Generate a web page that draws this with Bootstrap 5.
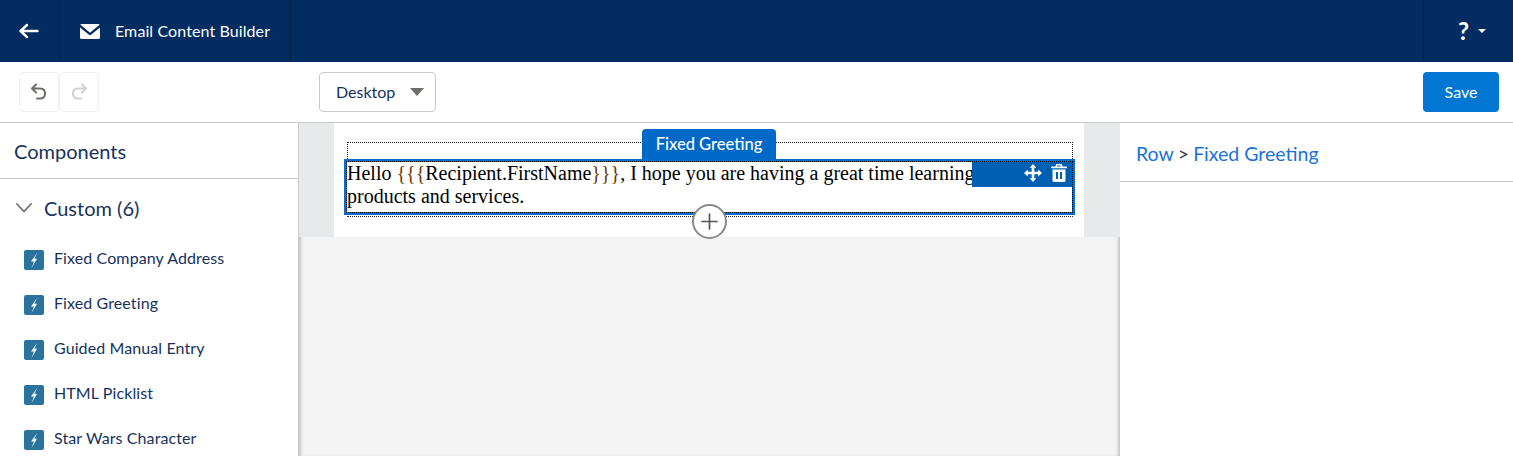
<!DOCTYPE html>
<html lang="en"><head><meta charset="utf-8"><title>Email Content Builder</title>
<link href="https://cdn.jsdelivr.net/npm/bootstrap@5.3.0/dist/css/bootstrap.min.css" rel="stylesheet">
<style>
html,body{height:456px;overflow:hidden}
body{font-family:"Lato","Open Sans",sans-serif;color:#16325c;font-size:16px;background:#fff}
.topbar{height:62px;background:#032d60;color:#fff}
.topcell{height:62px;border-right:1px solid #011e42}
.backcell{width:60px;padding-right:2px}
.titlecell{width:231px;padding-left:20px;gap:15px;font-size:16px;letter-spacing:.1px}
.helpcell{width:90px;border-right:0;border-left:1px solid #011e42;padding-left:34px;gap:9px;font-size:24px;font-weight:700}
.toolrow{height:61px;border-bottom:1px solid #c9c9c9;padding:10px 14px 10px 19px}
.undogroup{width:300px;flex:none}
.iconbtn{width:40px;height:40px;border:1px solid #f0f0f0;border-radius:4px;background:#fff;padding:0}
.viewsel{width:117px;height:40px;border:1px solid #c9c9c9;border-radius:4px;background:#fff;color:#16325c;padding:0 11px 0 16px;font-size:16px}
.carettri{width:0;height:0;border-left:7px solid transparent;border-right:7px solid transparent;border-top:8px solid #706e6b}
.savebtn{width:76px;height:40px;background:#0176d3;border:0;border-radius:4px;color:#fff;font-size:16px;padding:0}
.savebtn:hover{background:#0176d3;color:#fff}
.workspace{height:333px}
.leftpanel{width:299px;flex:none;border-right:1px solid #c9c9c9}
.panelhead{height:56px;border-bottom:1px solid #c9c9c9;padding-left:14px;font-size:20px}
.grouphead{height:58px;padding-left:16px;gap:12px;font-size:20px}
.compitem{height:45px;padding-left:24px;gap:10px;font-size:16px;letter-spacing:.1px}
.compitem span{padding-bottom:4px}
.compicon{width:20px;height:20px;border-radius:2px;background:#2a739e;flex:none}
.canvasarea{width:821px;flex:none;background:#f3f3f3;position:relative;box-shadow:inset 4px 0 3px -2px #c4c4c4,inset -4px 0 3px -2px #c4c4c4}
.stageband{height:114px;background:#e8e9eb;padding:0 36px 0 35px;position:relative}
.stagepage{height:114px;background:#fff;position:relative}
.dottedbox{position:absolute;left:13px;top:19px;width:726px;height:75px;border:1px dotted #222}
.selectbox{position:absolute;left:10px;top:36px;width:731px;height:56px;border:3px solid #0b6cc9;background:#fff}
.selectinner{outline:1px dotted #000;height:50px;font-family:"Liberation Serif",serif;font-size:20px;line-height:23px;color:#000}
.mergefield{color:#6b3a00}
.blocktag{position:absolute;left:308px;top:6px;width:134px;height:31px;background:#0069c8;color:#fff;border-radius:4px 4px 0 0;font-size:16.5px;font-weight:500}
.hoverbar{position:absolute;right:0;top:0;width:100px;height:25px;background:#005fb2;gap:9px;padding-right:5px;padding-bottom:3px}
.addcircle{position:absolute;left:358px;top:81px;width:35px;height:35px;border-radius:50%;border:2px solid #8a8a8a;background:#fff;padding:0}
.rightpanel{flex:1 1 auto}
.crumbhead{height:59px;border-bottom:1px solid #c9c9c9;padding-left:16px;padding-top:4px;font-size:19.5px;color:#1b72d8;gap:4px}
.crumbsep{color:#3e3e3c}
</style></head><body>
<div class="topbar d-flex align-items-center">
  <div class="topcell backcell d-flex align-items-center justify-content-center">
    <svg width="20" height="16" viewBox="0 0 20 16" fill="none" stroke="#fff" stroke-width="2.4" stroke-linecap="round" stroke-linejoin="round"><path d="M18.5 8H2M8 2 1.5 8 8 14"/></svg>
  </div>
  <div class="topcell titlecell d-flex align-items-center">
    <svg width="20" height="15" viewBox="0 0 20 15"><path fill="#fff" d="M1.2 0h17.6c.5 0 .8.6.4 1L10.6 8.2a1 1 0 0 1-1.2 0L.8 1c-.4-.4-.1-1 .4-1zM0 3.400 8.700 10.500a2 2 0 0 0 2.600 0L20 3.400V13.500c0 .8-.7 1.500-1.500 1.500h-17C.7 15 0 14.300 0 13.500z"/></svg>
    <span>Email Content Builder</span>
  </div>
  <div class="flex-grow-1"></div>
  <div class="topcell helpcell d-flex align-items-center">
    <span>?</span><span class="d-block" style="width:0;height:0;border-left:4px solid transparent;border-right:4px solid transparent;border-top:4px solid #fff"></span>
  </div>
</div>
<div class="toolrow d-flex align-items-center">
  <div class="undogroup d-flex"><div class="d-flex">
    <button class="iconbtn d-flex align-items-center justify-content-center" type="button" aria-label="Undo"><svg width="18" height="18" viewBox="0 0 18 18" fill="none" stroke="#706e6b" stroke-width="2" stroke-linecap="round" stroke-linejoin="round"><path d="M6 1.500 2 5.500 6 9.500M2.500 5.500H10c3 0 5 2 5 5s-2 5-5 5H7"/></svg></button>
    <button class="iconbtn d-flex align-items-center justify-content-center" type="button" aria-label="Redo"><svg width="18" height="18" viewBox="0 0 18 18" fill="none" stroke="#d0d0d0" stroke-width="2" stroke-linecap="round" stroke-linejoin="round"><path d="M12 1.500 16 5.500 12 9.500M15.500 5.500H8c-3 0-5 2-5 5s2 5 5 5h3"/></svg></button>
  </div></div>
  <button class="viewsel d-flex align-items-center justify-content-between" type="button"><span>Desktop</span><span class="carettri d-block"></span></button>
  <div class="flex-grow-1"></div>
  <button class="btn savebtn" type="button">Save</button>
</div>
<div class="workspace d-flex">
  <aside class="leftpanel">
    <div class="panelhead d-flex align-items-center">Components</div>
    <div class="grouphead d-flex align-items-center">
      <svg width="16" height="10" viewBox="0 0 16 10" fill="none" stroke="#706e6b" stroke-width="1.800" stroke-linecap="round" stroke-linejoin="round"><path d="M1 1l7 7.500L15 1"/></svg><span>Custom (6)</span>
    </div>
    <div class="compitem d-flex align-items-center"><svg class="compicon" viewBox="0 0 20 20"><path fill="#fff" d="M13.500 2.500 7 11.500H10L7.500 18 13 8.800H10.300z"/></svg><span>Fixed Company Address</span></div>
    <div class="compitem d-flex align-items-center"><svg class="compicon" viewBox="0 0 20 20"><path fill="#fff" d="M13.500 2.500 7 11.500H10L7.500 18 13 8.800H10.300z"/></svg><span>Fixed Greeting</span></div>
    <div class="compitem d-flex align-items-center"><svg class="compicon" viewBox="0 0 20 20"><path fill="#fff" d="M13.500 2.500 7 11.500H10L7.500 18 13 8.800H10.300z"/></svg><span>Guided Manual Entry</span></div>
    <div class="compitem d-flex align-items-center"><svg class="compicon" viewBox="0 0 20 20"><path fill="#fff" d="M13.500 2.500 7 11.500H10L7.500 18 13 8.800H10.300z"/></svg><span>HTML Picklist</span></div>
    <div class="compitem d-flex align-items-center"><svg class="compicon" viewBox="0 0 20 20"><path fill="#fff" d="M13.500 2.500 7 11.500H10L7.500 18 13 8.800H10.300z"/></svg><span>Star Wars Character</span></div>
  </aside>
  <main class="canvasarea">
    <div class="stageband"><div class="stagepage">
      <div class="dottedbox"></div>
      <div class="selectbox"><div class="selectinner">Hello <span class="mergefield">{{{</span>Recipient.FirstName<span class="mergefield">}}}</span>, I hope you are having a great time learning about our products and services.</div>
        <div class="hoverbar d-flex align-items-center justify-content-end">
          <svg width="18" height="18" viewBox="0 0 18 18" fill="#fff"><path d="M9 0l3.400 3.800H10.300V7.700h3.900V5.600L18 9l-3.800 3.400v-2.100H10.300v3.900h2.100L9 18l-3.400-3.800h2.100V10.300H3.800v2.100L0 9l3.800-3.400v2.100H7.700V3.800H5.600z"/></svg>
          <svg width="16" height="18" viewBox="0 0 16 18" fill="#fff"><path d="M6 0h4c.8 0 1.300.6 1.300 1.300V2.500H15c.6 0 1 .4 1 1v.8H0v-.8c0-.6.4-1 1-1h3.700V1.300C4.700.6 5.200 0 6 0zm.2 1.400v1.100h3.600V1.400zM1.500 5.500h13v11c0 .8-.7 1.500-1.500 1.500H3c-.8 0-1.500-.7-1.500-1.500zM5 8v7h2V8zm4 0v7h2V8z"/></svg>
        </div>
      </div>
      <div class="blocktag d-flex align-items-center justify-content-center">Fixed Greeting</div>
      <button class="addcircle d-flex align-items-center justify-content-center" type="button" aria-label="Add"><svg width="17" height="17" viewBox="0 0 17 17" stroke="#54565b" stroke-width="1.700" stroke-linecap="round"><path d="M8.500 1v15M1 8.500h15"/></svg></button>
    </div></div>
  </main>
  <aside class="rightpanel">
    <div class="crumbhead d-flex align-items-center"><span>Row</span><span class="crumbsep">&gt;</span><span>Fixed Greeting</span></div>
  </aside>
</div>
</body></html>
